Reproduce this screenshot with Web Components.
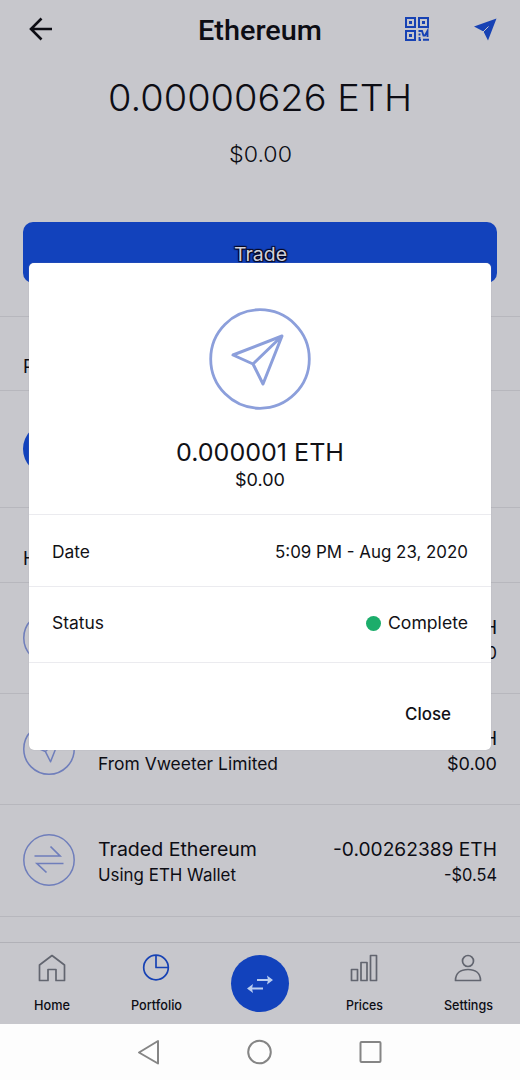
<!DOCTYPE html>
<html lang="en">
<head>
<meta charset="utf-8">
<title>Ethereum</title>
<style>
html,body{margin:0;padding:0}
body{width:520px;height:1080px;overflow:hidden;background:#fdfdfd;font-family:Inter,"Liberation Sans",sans-serif;color:#0d0d14}
</style>
</head>
<body>
<wallet-app></wallet-app>
<script>
const define=(name,html,setup)=>customElements.define(name,class extends HTMLElement{
  connectedCallback(){
    if(this.shadowRoot)return;
    const t=document.createElement('template');
    t.innerHTML=html;
    this.attachShadow({mode:'open'}).append(t.content.cloneNode(true));
    if(setup)setup.call(this,this.shadowRoot);
  }
});

/* A line of text that is stretched so that it spans the width given in "w". */
define('fit-text',`<style>:host{display:block;white-space:nowrap;flex:none}span{display:inline-block;transform-origin:0 50%}</style><span><slot></slot></span>`,function(r){
  const s=r.querySelector('span'),w=+this.getAttribute('w');
  const k=w/s.getBoundingClientRect().width;
  this.style.width=w+'px';
  s.style.transform='scaleX('+k.toFixed(4)+')';
});

const plane='<path d="M24 47 73 28 54 76 44 56Z M44 56 73 28" fill="none" stroke="currentColor" stroke-width="3" stroke-linejoin="round"/>';
define('round-icon',`<style>:host{display:block;flex:none;color:#6f7ebb}svg{display:block;width:100%;height:100%}</style><svg></svg>`,function(r){
  const svg=r.querySelector('svg');
  if(this.getAttribute('kind')==='plane'){
    svg.setAttribute('viewBox','0 0 102 102');
    const k=this.hasAttribute('small');
    svg.innerHTML='<circle cx="51" cy="51" r="'+(k?49.5:49.3)+'" fill="none" stroke="currentColor" stroke-width="'+(k?3:2.8)+'"/>'+plane;
  }else{
    svg.setAttribute('viewBox','0 0 52 52');
    svg.innerHTML='<g fill="none" stroke="currentColor" stroke-width="1.5"><circle cx="26" cy="26" r="25.2"/><path d="M11.5 22H37L27.5 12.5M40.500 29.500H14L23.500 38.500" stroke-width="1.700"/></g>';
  }
});

define('top-bar',`<style>
:host{display:grid;grid-template-columns:1fr auto 1fr;align-items:center;height:58px;padding:0 23px 0 28px}
.t{font:500 27px/32px Roboto,sans-serif;margin-top:3px;margin-left:-5px}
.r{display:flex;justify-content:flex-end;align-items:center;gap:45px;color:#1742b4}
svg{display:block}
</style>
<svg width="25" height="24" viewBox="0 0 25 24" fill="none" stroke="#0d0d14" stroke-width="2.600"><path d="M24 12H3M13.500 1.500 3 12 13.500 22.500"/></svg>
<div class="t"><fit-text w="124">Ethereum</fit-text></div>
<div class="r">
<svg width="24" height="24" viewBox="0 0 24 24" fill="none" stroke="currentColor" stroke-width="2"><path d="M1 1h9v9H1zM14 1h9v9h-9zM1 14h9v9H1z"/><path d="M4 4h3v3H4zM17 4h3v3h-3zM4 17h3v3H4z" fill="currentColor" stroke="none"/><path d="M13.500 14H17L18.500 18.500H20L22.500 14V20M14.500 16.500V18.500M14.500 20V23H16M18 22.800H24" stroke-width="1.900"/></svg>
<svg width="23" height="23" viewBox="0 0 23 23"><path d="M22.500 .500 14 22.500 9.500 13.500 0 8.500Z" fill="currentColor"/><path d="M9 14 14.500 8.500" stroke="#c7c7cc" stroke-width="1"/></svg>
</div>`);

define('balance-panel',`<style>
:host{display:flex;flex-direction:column;align-items:center;height:259px;border-bottom:1px solid #b7b7bd;box-sizing:border-box}
.a{font-size:37px;line-height:44px;font-weight:350;margin-top:18px}
.b{font-size:22px;line-height:28px;margin-top:20px;font-weight:350}
.btn{align-self:stretch;height:61px;margin:54px 23px 0;background:#1242bc;border-radius:10px;display:flex;justify-content:center;align-items:center;font-size:19px;color:#d0d0da;padding-top:4px;box-sizing:border-box;text-shadow:0 0 1px #080820,1px 1px 1px #080820,-1px -1px 1px #080820,1px -1px 1px #080820,-1px 1px 1px #080820}
</style>
<div class="a"><fit-text w="304">0.00000626 ETH</fit-text></div>
<div class="b"><fit-text w="63">$0.00</fit-text></div>
<div class="btn"><fit-text w="53">Trade</fit-text></div>`);

define('section-head',`<style>:host{display:flex;align-items:flex-start;box-sizing:border-box;border-bottom:1px solid #b7b7bd;padding:38px 23px 0;font-size:18px;line-height:24px;height:74px}:host([late]){height:75px;padding-top:39px}</style><div><slot></slot></div>`);

define('asset-row',`<style>:host{display:flex;align-items:center;height:117px;box-sizing:border-box;border-bottom:1px solid #b7b7bd;padding:0 23px}i{width:52px;height:52px;border-radius:50%;background:#1242bc}</style><i></i>`);

define('tx-row',`<style>
:host{display:flex;align-items:center;height:111.200px;box-sizing:border-box;border-bottom:1px solid #b7b7bd;padding:0 23px 1px}
round-icon{width:52px;height:52px}
.l{margin-left:23px;flex:1}.r{display:flex;flex-direction:column;align-items:flex-end}
.l,.r{padding-top:5px}
::slotted([slot=title]),::slotted([slot=amount]){font-size:19px;line-height:26px}
::slotted([slot=sub]),::slotted([slot=value]){font-size:17px;line-height:25px}
</style><round-icon small></round-icon><div class="l"><slot name="title"></slot><slot name="sub"></slot></div><div class="r"><slot name="amount"></slot><slot name="value"></slot></div>`,function(r){
  const o=r.querySelector('round-icon'),n=document.createElement('round-icon');
  n.setAttribute('small','');n.setAttribute('kind',this.getAttribute('kind'));o.replaceWith(n);
});

define('nav-item',`<style>:host{display:flex;flex-direction:column;align-items:center;width:104px;color:#62656f;padding-top:11px;box-sizing:border-box}
.i{height:28px;display:flex;align-items:center}.t{margin-top:14px;font-size:13px;font-weight:500;line-height:18px;color:#0d0d14}</style><div class="i"><slot name="icon"></slot></div><div class="t"><slot></slot></div>`);

define('tab-bar',`<style>:host{display:flex;height:82px;border-top:1px solid #b1b1b7;box-sizing:border-box}
svg{display:block;fill:none;stroke:currentColor;stroke-width:1.700;stroke-linejoin:round}
.c{width:104px;display:flex;justify-content:center;padding-top:12px}
.c div{width:58px;height:57px;border-radius:50%;background:#1242bc;display:flex;align-items:center;justify-content:center;color:#b9cdf0}
.p{color:#1742b4}
</style>
<nav-item><svg slot="icon" width="28" height="28" viewBox="0 0 28 28"><path d="M1.500 11 14 1.500 26.500 11V26.500H18V15.500H10V26.500H1.500Z"/></svg><fit-text w="36">Home</fit-text></nav-item>
<nav-item><svg class="p" slot="icon" width="28" height="28" viewBox="0 0 28 28"><circle cx="14" cy="13.500" r="12.300"/><path d="M14 1.200V13.500H26.300"/></svg><fit-text w="51">Portfolio</fit-text></nav-item>
<div class="c"><div><svg width="26" height="20" viewBox="0 0 26 20" style="stroke-width:2.200"><path d="M10 6H23M3 14.500H16"/><path d="M20 1.500 26 6 20 10.500 21 6ZM6 10 0 14.500 6 19 5 14.500Z" fill="currentColor" stroke="none"/></svg></div></div>
<nav-item><svg slot="icon" width="28" height="28" viewBox="0 0 28 28"><path d="M1.500 15.500H7.500V26.500H1.500ZM11 8.500H17V26.500H11ZM20.500 1.500H26.500V26.500H20.500Z"/></svg><fit-text w="37">Prices</fit-text></nav-item>
<nav-item><svg slot="icon" width="28" height="28" viewBox="0 0 28 28"><circle cx="14" cy="7" r="5.500"/><path d="M1.500 26.500C1.500 19 7 15.500 14 15.500S26.500 19 26.500 26.500Z"/></svg><fit-text w="49">Settings</fit-text></nav-item>`);

define('system-bar',`<style>:host{display:flex;height:56px;background:#fdfdfd;justify-content:center;align-items:center;gap:86px;padding-right:2px}svg{display:block;width:25px;height:26px;fill:none;stroke:#858585;stroke-width:2}</style>
<svg viewBox="0 0 25 26"><path d="M22 2V24.500L3 13.500Z" stroke-linejoin="round"/></svg>
<svg viewBox="0 0 25 26"><circle cx="12.500" cy="13" r="11.300"/></svg>
<svg viewBox="0 0 25 26"><rect x="2.500" y="3" width="20" height="20" rx="1"/></svg>`);

define('detail-line',`<style>:host{display:flex;justify-content:space-between;align-items:center;padding:0 23px;border-top:1px solid #ebebef;box-sizing:border-box;font-size:17px;line-height:24px}</style><slot></slot>`);

define('tx-dialog',`<style>
:host{display:flex;flex-direction:column;background:#fff;border-radius:5px;box-shadow:0 0 1px #9999a0;color:#111116}
.top{height:251px;display:flex;flex-direction:column;align-items:center;box-sizing:border-box;padding-top:45px}
round-icon{width:102px;height:102px;color:#8c9fdb}
.a{font-size:24px;line-height:30px;margin-top:28px}.b{font-size:17px;line-height:24px}
.date{height:72px;padding-top:2px}.status{height:76px;padding-bottom:3px}
.s{display:flex;align-items:center;gap:7px}.s i{width:15px;height:15px;border-radius:50%;background:#1cad6b;margin-top:1px}
.f{flex:1;border-top:1px solid #ebebef;display:flex;justify-content:flex-end;align-items:center;padding:14px 40px 0 0;font-size:17px;font-weight:500;line-height:24px}
</style>
<div class="top"><round-icon kind="plane"></round-icon><div class="a"><fit-text w="168">0.000001 ETH</fit-text></div><div class="b"><fit-text w="50">$0.00</fit-text></div></div>
<detail-line class="date"><fit-text w="38">Date</fit-text><fit-text w="193">5:09 PM - Aug 23, 2020</fit-text></detail-line>
<detail-line class="status"><fit-text w="52">Status</fit-text><div class="s"><i></i><fit-text w="80">Complete</fit-text></div></detail-line>
<div class="f"><fit-text w="46">Close</fit-text></div>`);

define('wallet-app',`<style>
:host{display:flex;flex-direction:column;width:520px;height:1080px;position:relative;overflow:hidden}
main{height:942px;background:#c7c7cc;overflow:hidden}
tab-bar{background:#c7c7cc}
tx-dialog{position:absolute;left:29px;top:263px;width:462px;height:487px}
</style>
<main>
<top-bar></top-bar><balance-panel></balance-panel>
<section-head>P</section-head><asset-row></asset-row><section-head late>H</section-head>
<tx-row kind="plane"><div slot="amount">H</div><div slot="value">0</div></tx-row>
<tx-row kind="plane"><div slot="title">&nbsp;</div><fit-text slot="sub" w="180">From Vweeter Limited</fit-text><div slot="amount">H</div><fit-text slot="value" w="50">$0.00</fit-text></tx-row>
<tx-row kind="trade"><fit-text slot="title" w="159">Traded Ethereum</fit-text><fit-text slot="sub" w="138">Using ETH Wallet</fit-text><fit-text slot="amount" w="164">-0.00262389 ETH</fit-text><fit-text slot="value" w="53">-$0.54</fit-text></tx-row>
</main>
<tab-bar></tab-bar><system-bar></system-bar>
<tx-dialog></tx-dialog>`);
</script>
</body>
</html>
